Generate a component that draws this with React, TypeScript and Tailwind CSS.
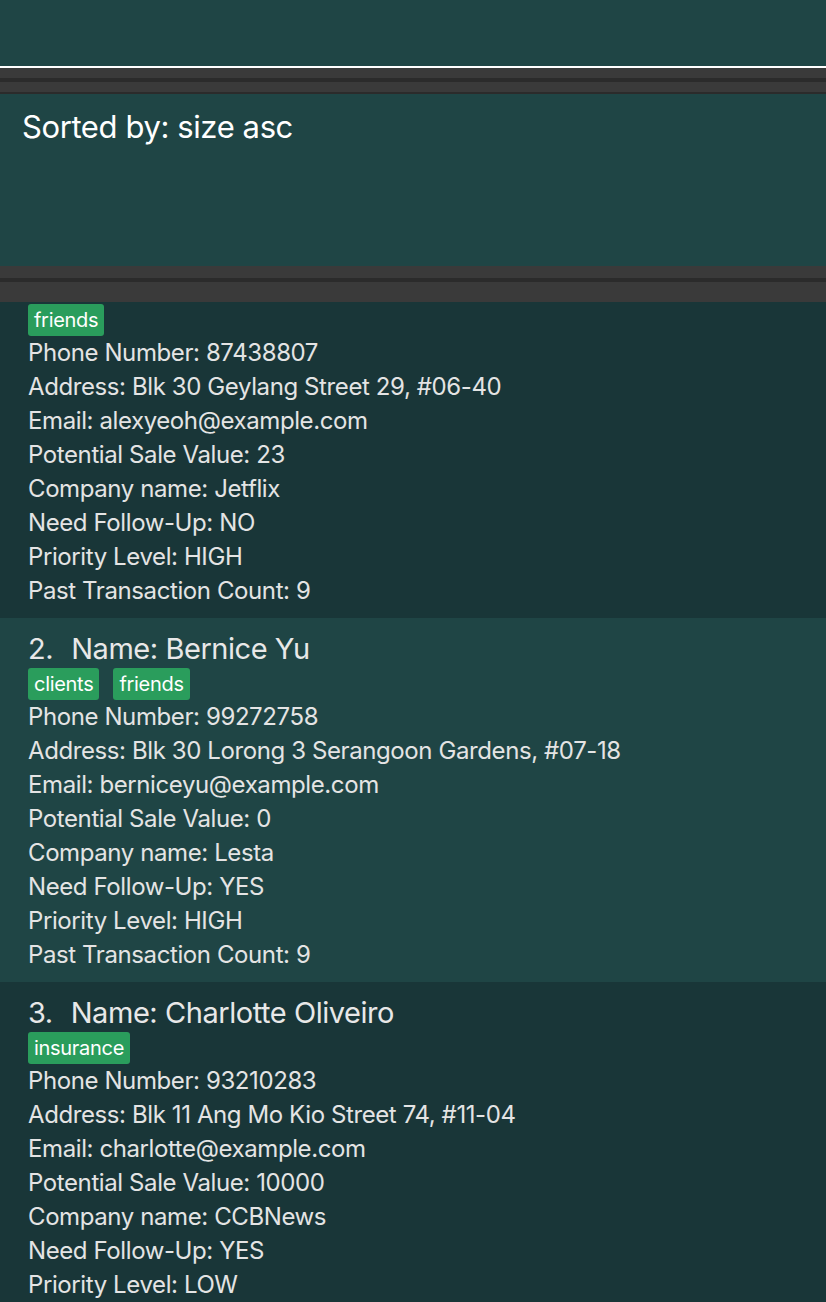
const persons = [
  {
    index: 1,
    name: 'Alex Yeoh',
    tags: ['friends'],
    phone: '87438807',
    address: 'Blk 30 Geylang Street 29, #06-40',
    email: 'alexyeoh@example.com',
    saleValue: '23',
    company: 'Jetflix',
    followUp: 'NO',
    priority: 'HIGH',
    transactions: '9',
  },
  {
    index: 2,
    name: 'Bernice Yu',
    tags: ['clients', 'friends'],
    phone: '99272758',
    address: 'Blk 30 Lorong 3 Serangoon Gardens, #07-18',
    email: 'berniceyu@example.com',
    saleValue: '0',
    company: 'Lesta',
    followUp: 'YES',
    priority: 'HIGH',
    transactions: '9',
  },
  {
    index: 3,
    name: 'Charlotte Oliveiro',
    tags: ['insurance'],
    phone: '93210283',
    address: 'Blk 11 Ang Mo Kio Street 74, #11-04',
    email: 'charlotte@example.com',
    saleValue: '10000',
    company: 'CCBNews',
    followUp: 'YES',
    priority: 'LOW',
    transactions: '4',
  },
];

type Person = (typeof persons)[number];

function PersonCard({ person, odd, scrolled }: { person: Person; odd: boolean; scrolled?: boolean }) {
  const lines = [
    `Phone Number: ${person.phone}`,
    `Address: ${person.address}`,
    `Email: ${person.email}`,
    `Potential Sale Value: ${person.saleValue}`,
    `Company name: ${person.company}`,
    `Need Follow-Up: ${person.followUp}`,
    `Priority Level: ${person.priority}`,
    `Past Transaction Count: ${person.transactions}`,
  ];

  return (
    <div className={`pl-[28px] pb-[10px] ${scrolled ? '' : 'pt-[10px]'} ${odd ? 'bg-[#193638]' : 'bg-[#1f4545]'}`}>
      {/* name row (scrolled out of view for the first card) */}
      {!scrolled && (
        <div className="h-[38px] pt-[3px] flex items-center text-[29px] tracking-[-0.45px] text-[#e8e8e8]">
          <span>{person.index}.</span>
          <span className="ml-[18px]">Name: {person.name}</span>
        </div>
      )}

      {/* tags */}
      <div className="pt-[2px] h-[34px] flex gap-[14px]">
        {person.tags.map((tag) => (
          <span
            key={tag}
            className="h-[32px] px-[6px] flex items-center rounded-[3px] bg-[#2a9d5c] text-white text-[20px] tracking-[-0.3px]"
          >
            {tag}
          </span>
        ))}
      </div>

      {lines.map((line) => (
        <div
          key={line}
          className="h-[34px] leading-[34px] text-[24px] tracking-[-0.4px] text-[#e4e4e4] whitespace-nowrap"
        >
          {line}
        </div>
      ))}
    </div>
  );
}

export default function App() {
  return (
    <div className="w-[826px] h-[1302px] overflow-hidden flex flex-col bg-[#193638] font-['Inter',sans-serif]">
      {/* command box area */}
      <div className="h-[66px] bg-[#1f4545]" />
      <div className="h-[2px] bg-white" />

      {/* divider */}
      <div className="h-[10px] bg-[#3a3a3a]" />
      <div className="h-[4px] bg-[#2b2b2b]" />
      <div className="h-[10px] bg-[#3a3a3a]" />
      <div className="h-[2px] bg-[#2b2b2b]" />

      {/* result display */}
      <div className="h-[172px] bg-[#1f4545] pl-[22px] pt-[13px]">
        <div className="text-[31px] tracking-[-0.4px] text-white leading-[40px]">Sorted by: size asc</div>
      </div>

      {/* divider */}
      <div className="h-[12px] bg-[#3a3a3a]" />
      <div className="h-[4px] bg-[#2b2b2b]" />
      <div className="h-[20px] bg-[#3a3a3a]" />

      {/* person list */}
      <div className="flex-1 overflow-hidden">
        {persons.map((p, i) => (
          <PersonCard key={p.index} person={p} odd={i % 2 === 0} scrolled={i === 0} />
        ))}
      </div>
    </div>
  );
}
